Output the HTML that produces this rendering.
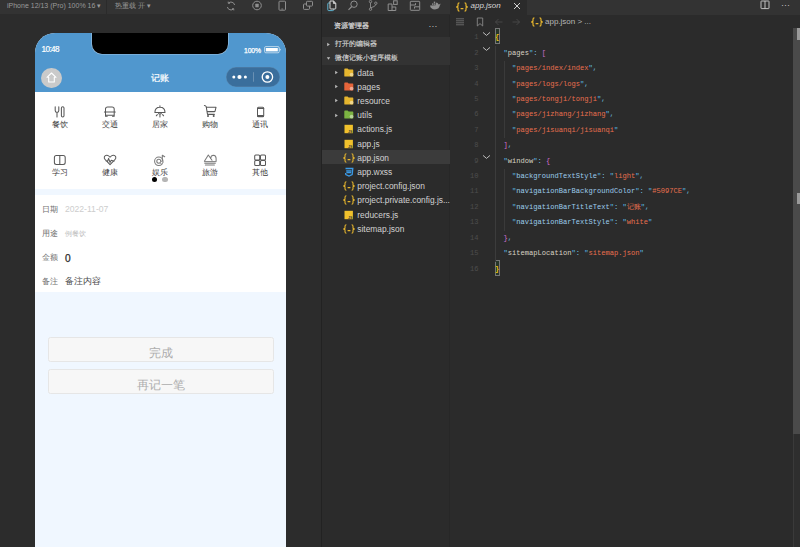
<!DOCTYPE html>
<html><head><meta charset="utf-8">
<style>
*{margin:0;padding:0;box-sizing:border-box}
html,body{width:800px;height:547px;overflow:hidden;background:#2b2b2b;font-family:"Liberation Sans",sans-serif}
.a{position:absolute}
svg{display:block}
#sim{left:0;top:0;width:321px;height:547px;background:#2c2c2c}
#simbar{left:0;top:0;width:321px;height:14px;background:#333}
#vdiv{left:321px;top:0;width:1px;height:547px;background:#222}
#exp{left:322px;top:0;width:128px;height:547px;background:#2b2b2b}
#expbar{left:322px;top:0;width:128px;height:14px;background:#333}
#ed{left:450px;top:0;width:350px;height:547px;background:#2b2b2b}
#tabbar{left:450px;top:0;width:350px;height:14.5px;background:#333}
#tab{left:450px;top:0;width:77px;height:14.5px;background:#2b2b2b}
.tb{font-size:7px;color:#9a9a9a;white-space:nowrap;line-height:10px}
/* phone */
#phone{left:34.5px;top:33px;width:251px;height:520px;background:#f0f7ff;border-radius:20px 20px 0 0;overflow:hidden}
#hdr{left:0;top:0;width:251px;height:59px;background:#5097ce}
#notch{left:57.5px;top:-1px;width:136px;height:22px;background:#000;border-radius:0 0 10px 10px;box-shadow:0 0 0 0.6px #9ec3e3}
#grid{left:0;top:59px;width:251px;height:97px;background:#fff}
#form{left:0;top:162px;width:251px;height:97px;background:#fff}
.btn{left:13.5px;width:225.5px;height:25px;background:#f7f7f7;border:0.8px solid #e6e6e6;border-radius:2.5px;font-size:11.6px;color:#adadad;text-align:center;line-height:29.5px}
.gi{width:50px;text-align:center;font-size:7.6px;color:#3a3a3a;line-height:9px}
.code{font-family:"Liberation Mono",monospace;font-size:7.08px;line-height:15.42px;white-space:pre}
.ln{left:450px;width:28.6px;text-align:right;color:#4d4d4d;font-family:"Liberation Mono",monospace;font-size:7.08px;line-height:15.42px}
.fr{left:322px;width:128px;height:14.2px;font-size:7.6px;color:#c5c5c5;line-height:14.2px;white-space:nowrap}

.b1{color:#f1c40f;font-weight:bold}.b2{color:#d070d0}.q{color:#5cb8e0}.k1{color:#d8d2c4}.k2{color:#9ccbec}.s{color:#e8704f}.c{color:#7cc4e4}.m{color:#6cb8dc}
.fl{font-size:8.4px;color:#707070;line-height:12px;white-space:nowrap}.fv{line-height:12px;white-space:nowrap}
.ft{font-size:8.4px;color:#d2d2d2;line-height:10.8px;white-space:nowrap}
</style></head><body>
<div id="sim" class="a"></div>
<div id="simbar" class="a"></div>
<div id="vdiv" class="a"></div>
<div id="exp" class="a"></div>
<div id="expbar" class="a"></div>
<div id="ed" class="a"></div>
<div id="tabbar" class="a"></div>
<div id="tab" class="a"></div>
<div class="a" style="left:449.3px;top:14.5px;width:1px;height:533px;background:#272727"></div>

<!-- simulator toolbar -->
<div class="a tb" style="left:7px;top:0.6px">iPhone 12/13 (Pro) 100% 16 ▾</div>
<div class="a tb" style="left:115px;top:0.6px">热重载 开 ▾</div>

<!-- phone -->
<div id="phone" class="a">
  <div id="hdr" class="a"></div>
  <div id="notch" class="a"></div>
  <div class="a" style="left:7px;top:11.8px;font-size:8.2px;color:#fff;line-height:10px;letter-spacing:-0.6px;-webkit-text-stroke:0.2px #fff">10:48</div>
  <div class="a" style="left:209.5px;top:13.5px;font-size:6.8px;color:#fff;line-height:8px;letter-spacing:-0.15px;-webkit-text-stroke:0.25px #fff">100%</div>
  <svg class="a" style="left:229px;top:12.5px" width="18" height="8" viewBox="0 0 18 8">
    <rect x="0.6" y="0.6" width="14.6" height="6.2" rx="1.2" fill="none" stroke="rgba(255,255,255,0.6)" stroke-width="1"/>
    <rect x="1.8" y="2" width="12" height="3.4" fill="#fff"/>
    <path d="M15.6 2.3 L17 3.7 L15.6 5.1 Z" fill="rgba(255,255,255,0.7)"/>
  </svg>
  <!-- nav -->
  <div class="a" style="left:6.2px;top:34.5px;width:21px;height:20.5px;border-radius:50%;background:#cacaca"></div>
  <svg class="a" style="left:11px;top:39px" width="11" height="11" viewBox="0 0 11 11">
    <path d="M5.5 1 L10 5.3 L8.3 5.3 L8.3 10 L2.7 10 L2.7 5.3 L1 5.3 Z" fill="none" stroke="#fff" stroke-width="1.1" stroke-linejoin="round"/>
  </svg>
  <div class="a" style="left:0;top:39px;width:251px;text-align:center;font-size:8.6px;color:#fff;line-height:12px;-webkit-text-stroke:0.2px #fff">记账</div>
  <div class="a" style="left:191px;top:34.1px;width:54.6px;height:19.5px;border-radius:10px;background:#3a6e9c;box-shadow:inset 0 0 0 0.5px rgba(255,255,255,0.15)"></div>
  <svg class="a" style="left:191px;top:34.1px" width="55" height="20" viewBox="0 0 55 20">
    <circle cx="7.8" cy="10" r="1.5" fill="#fff"/>
    <circle cx="13.5" cy="10" r="2.1" fill="#fff"/>
    <circle cx="19.4" cy="10" r="1.5" fill="#fff"/>
    <rect x="27" y="5.2" width="0.8" height="9.5" fill="rgba(255,255,255,0.3)"/>
    <circle cx="41.4" cy="10" r="5.2" fill="none" stroke="#fff" stroke-width="1.3"/>
    <circle cx="41.4" cy="10" r="2" fill="#fff"/>
  </svg>
  <div id="grid" class="a"></div>
  <div id="form" class="a"></div>
  <svg class="a" style="left:18.7px;top:71.6px" width="15" height="15" viewBox="53.2 104.6 15 15"><path d="M55.4 106.4 L55.4 110 Q55.4 111.8 57.2 112.2 L57.2 116.6 M59 106.4 L59 110 Q59 111.8 57.2 112.2" fill="none" stroke="#585858" stroke-width="1.05" stroke-linejoin="round" stroke-linecap="round"/><rect x="61.6" y="106.4" width="2.6" height="10.2" rx="1.3" fill="none" stroke="#585858" stroke-width="1.05" stroke-linejoin="round" stroke-linecap="round"/></svg>
  <svg class="a" style="left:68.3px;top:71.6px" width="15" height="15" viewBox="102.8 104.6 15 15"><path d="M105.3 111.5 L105.3 108.6 Q105.3 106.6 107.5 106.6 L111.8 106.6 Q114 106.6 114 108.6 L114 111.5 M104.2 111.5 L115.1 111.5 M105.3 111.5 L105.3 115.6 M114 111.5 L114 115.6 M105.3 114.8 L114 114.8" fill="none" stroke="#585858" stroke-width="1.05" stroke-linejoin="round" stroke-linecap="round"/><path d="M105.6 115.9 L107 115.9 M112.3 115.9 L113.7 115.9" fill="none" stroke="#585858" stroke-width="1.05" stroke-linejoin="round" stroke-linecap="round" stroke-width="1.2"/></svg>
  <svg class="a" style="left:118.4px;top:71.6px" width="15" height="15" viewBox="152.9 104.6 15 15"><path d="M154.8 112 Q154.8 106.8 159.85 106.8 Q164.9 106.8 164.9 112 Z M159.85 105.4 L159.85 106.8 M158.3 112.2 Q158.5 113.8 159.85 113.8 Q161.2 113.8 161.4 112.2 M157.2 114.2 L156.2 115.4 M159.85 114.6 L159.85 116.6 M162.5 114.2 L163.5 115.4" fill="none" stroke="#585858" stroke-width="1.05" stroke-linejoin="round" stroke-linecap="round"/></svg>
  <svg class="a" style="left:168.7px;top:71.2px" width="15" height="15" viewBox="203.2 104.2 15 15"><path d="M207.4 111.6 L215.2 111.6 L214.6 114.6 L207.7 114.6 Z" fill="#d6d6d6"/><path d="M204.6 105.6 Q206 105.6 206.4 106.8 L207.7 114.6 L214.6 114.6 M206.8 107.5 L216.2 107.5 L215.2 111.6 L207.4 111.6" fill="none" stroke="#585858" stroke-width="1.05" stroke-linejoin="round" stroke-linecap="round"/><circle cx="208.2" cy="116.3" r="1" fill="#585858"/><circle cx="213.9" cy="116.3" r="1" fill="#585858"/></svg>
  <svg class="a" style="left:218.7px;top:71.6px" width="15" height="15" viewBox="253.2 104.6 15 15"><rect x="257.7" y="106.9" width="6.2" height="9.4" rx="1" fill="none" stroke="#585858" stroke-width="1.05" stroke-linejoin="round" stroke-linecap="round"/><path d="M257.7 108.1 L263.9 108.1" fill="none" stroke="#585858" stroke-width="1.05" stroke-linejoin="round" stroke-linecap="round"/><rect x="257.4" y="114.5" width="6.8" height="2" rx="0.8" fill="#585858"/></svg>
  <svg class="a" style="left:18.7px;top:119.6px" width="15" height="15" viewBox="53.2 152.6 15 15"><rect x="54.6" y="155" width="10.8" height="9.2" rx="2" fill="none" stroke="#585858" stroke-width="1.05" stroke-linejoin="round" stroke-linecap="round"/><path d="M60 155 L60 164.2" fill="none" stroke="#585858" stroke-width="1.05" stroke-linejoin="round" stroke-linecap="round"/></svg>
  <svg class="a" style="left:68.3px;top:119.6px" width="15" height="15" viewBox="102.8 152.6 15 15"><path d="M109.85 164.2 L105 159.3 Q103.6 157.8 104.2 156.3 Q105 154.7 106.8 154.9 Q108.6 155.1 109.85 156.8 Q111.1 155.1 112.9 154.9 Q114.7 154.7 115.5 156.3 Q116.1 157.8 114.7 159.3 Z M106 160.6 L107.5 160.6 L108.4 158 L109.8 162 L111 159.8 L113.8 160.8" fill="none" stroke="#585858" stroke-width="1.05" stroke-linejoin="round" stroke-linecap="round"/></svg>
  <svg class="a" style="left:118.4px;top:119.6px" width="15" height="15" viewBox="152.9 152.6 15 15"><circle cx="158.7" cy="160.9" r="4.2" fill="none" stroke="#7a7a7a" stroke-width="1.05" stroke-linejoin="round" stroke-linecap="round"/><circle cx="158.7" cy="160.9" r="2" fill="none" stroke="#7a7a7a" stroke-width="1.05" stroke-linejoin="round" stroke-linecap="round"/><path d="M162.2 160.5 L162.2 154.8 L164.6 156.4" fill="none" stroke="#7a7a7a" stroke-width="1.05" stroke-linejoin="round" stroke-linecap="round"/><circle cx="161.5" cy="162.3" r="1.2" fill="#fff" stroke="#8a8a8a" stroke-width="0.9"/></svg>
  <svg class="a" style="left:168.7px;top:119.6px" width="15" height="15" viewBox="203.2 152.6 15 15"><path d="M204.6 160.8 L208.5 154.6 L212.2 159.8 M210.8 158.2 Q211 155 213.6 154.8 Q216.3 155 216.3 158 L216.3 160.8 M205 162.9 L215.5 162.9 M205.6 164.5 L214.6 164.5" fill="none" stroke="#7a7a7a" stroke-width="1.05" stroke-linejoin="round" stroke-linecap="round"/><path d="M204.3 161.3 L216.4 161.3" stroke="#8a8a8a" stroke-width="1.3"/></svg>
  <svg class="a" style="left:218.7px;top:119.6px" width="15" height="15" viewBox="253.2 152.6 15 15"><rect x="254.9" y="154.6" width="5" height="5" rx="1" fill="none" stroke="#585858" stroke-width="1.05" stroke-linejoin="round" stroke-linecap="round"/><rect x="260.7" y="154.6" width="5" height="5" rx="1" fill="none" stroke="#585858" stroke-width="1.05" stroke-linejoin="round" stroke-linecap="round"/><rect x="254.9" y="160.2" width="5" height="5" rx="1" fill="none" stroke="#585858" stroke-width="1.05" stroke-linejoin="round" stroke-linecap="round"/><rect x="260.7" y="160.2" width="5" height="5" rx="1" fill="none" stroke="#585858" stroke-width="1.05" stroke-linejoin="round" stroke-linecap="round"/></svg>
  <div class="a gi" style="left:0.1px;top:86.8px">餐饮</div>
  <div class="a gi" style="left:50.3px;top:86.8px">交通</div>
  <div class="a gi" style="left:100.5px;top:86.8px">居家</div>
  <div class="a gi" style="left:150.7px;top:86.8px">购物</div>
  <div class="a gi" style="left:200.9px;top:86.8px">通讯</div>
  <div class="a gi" style="left:0.1px;top:134.9px">学习</div>
  <div class="a gi" style="left:50.3px;top:134.9px">健康</div>
  <div class="a gi" style="left:100.5px;top:134.9px">娱乐</div>
  <div class="a gi" style="left:150.7px;top:134.9px">旅游</div>
  <div class="a gi" style="left:200.9px;top:134.9px">其他</div>
  <div class="a" style="left:117.3px;top:143.9px;width:5.6px;height:5.6px;border-radius:50%;background:#000"></div>
  <div class="a" style="left:127.9px;top:143.9px;width:5.6px;height:5.6px;border-radius:50%;background:#b5b5b5"></div>
  <div class="a fl" style="left:7px;top:169.7px">日期</div>
  <div class="a fv" style="left:30.5px;top:170px;font-size:8.6px;color:#cdcdcd">2022-11-07</div>
  <div class="a fl" style="left:7px;top:194.3px">用途</div>
  <div class="a fv" style="left:30.5px;top:195.3px;font-size:7.2px;color:#bdbdbd">例餐饮</div>
  <div class="a fl" style="left:7px;top:218.0px">金额</div>
  <div class="a fv" style="left:30.5px;top:219.5px;font-size:10.2px;color:#2a2a2a;-webkit-text-stroke:0.25px #2a2a2a">0</div>
  <div class="a fl" style="left:7px;top:241.6px">备注</div>
  <div class="a fv" style="left:30.5px;top:241.6px;font-size:9.4px;color:#4a4a4a">备注内容</div>
  <div class="a btn" style="top:304px">完成</div>
  <div class="a btn" style="top:336px">再记一笔</div>
</div>

<!-- toolbars -->
<svg class="a" style="left:224.7px;top:-0.5px" width="12" height="12" viewBox="0 0 12 12"><path d="M9.6 5 A3.7 3.7 0 0 0 3.4 3.1 M2.4 7 A3.7 3.7 0 0 0 8.6 8.9" fill="none" stroke="#8f8f8f" stroke-width="1"/><path d="M3.2 1.6 L3.3 3.3 L5 3.3 M8.8 10.4 L8.7 8.7 L7 8.7" fill="none" stroke="#8f8f8f" stroke-width="0.9"/></svg>
<svg class="a" style="left:250.5px;top:0px" width="12" height="12" viewBox="0 0 12 12"><circle cx="6" cy="5.5" r="4.3" fill="none" stroke="#8f8f8f" stroke-width="1"/><rect x="4.3" y="3.8" width="3.4" height="3.4" rx="0.4" fill="#8f8f8f"/></svg>
<svg class="a" style="left:276px;top:0px" width="12" height="12" viewBox="0 0 12 12"><rect x="3" y="1.2" width="6.5" height="9" rx="0.8" fill="none" stroke="#8f8f8f" stroke-width="1"/><path d="M5.3 9 L7.2 9" stroke="#8f8f8f" stroke-width="0.8"/></svg>
<svg class="a" style="left:302px;top:0px" width="12" height="12" viewBox="0 0 12 12"><rect x="4.5" y="1.3" width="6" height="4.8" rx="0.8" fill="none" stroke="#8f8f8f" stroke-width="1"/><path d="M4.5 4 L2.3 4 Q1.5 4 1.5 4.8 L1.5 8.6 Q1.5 9.4 2.3 9.4 L6.7 9.4 Q7.5 9.4 7.5 8.6 L7.5 6.1" fill="none" stroke="#8f8f8f" stroke-width="1"/></svg>
<div class="a" style="left:106px;top:0;width:1px;height:14px;background:#2b2b2b"></div>
<svg class="a" style="left:325.5px;top:0px" width="12" height="12" viewBox="0 0 12 12"><path d="M4 3 L2.6 3 Q1.8 3 1.8 3.8 L1.8 9.8 Q1.8 10.6 2.6 10.6 L6.8 10.6 Q7.6 10.6 7.6 9.8 L7.6 9" fill="none" stroke="#5fb3cf" stroke-width="1"/><path d="M4 1 L7.6 1 L9.8 3.2 L9.8 8.2 Q9.8 9 9 9 L4.8 9 Q4 9 4 8.2 Z" fill="none" stroke="#d8d8d8" stroke-width="1"/><path d="M7.4 1 L7.4 3.4 L9.8 3.4" fill="#d8d8d8" stroke="#d8d8d8" stroke-width="0.8"/></svg>
<svg class="a" style="left:346.5px;top:0px" width="12" height="12" viewBox="0 0 12 12"><circle cx="7" cy="4.2" r="3.2" fill="none" stroke="#8f8f8f" stroke-width="1"/><path d="M4.8 6.5 L1.5 9.8" stroke="#8f8f8f" stroke-width="1.1"/></svg>
<svg class="a" style="left:367px;top:0px" width="12" height="12" viewBox="0 0 12 12"><circle cx="3.5" cy="1.6" r="1.2" fill="none" stroke="#8f8f8f" stroke-width="0.9"/><circle cx="3.5" cy="9.2" r="1.2" fill="none" stroke="#8f8f8f" stroke-width="0.9"/><circle cx="8.8" cy="3.2" r="1.2" fill="none" stroke="#8f8f8f" stroke-width="0.9"/><path d="M3.5 2.8 L3.5 8 M8.8 4.4 Q8.8 6.5 3.8 7.8" fill="none" stroke="#8f8f8f" stroke-width="0.9"/></svg>
<svg class="a" style="left:386.5px;top:0px" width="12" height="12" viewBox="0 0 12 12"><path d="M1.2 4 L5 4 L5 10.5 L1.2 10.5 Z M5 7 L8.8 7 L8.8 10.5 L5 10.5" fill="none" stroke="#8f8f8f" stroke-width="1"/><rect x="6.6" y="0.8" width="3.6" height="3.6" fill="none" stroke="#8f8f8f" stroke-width="1"/></svg>
<svg class="a" style="left:408.5px;top:0px" width="12" height="12" viewBox="0 0 12 12"><rect x="1.3" y="1.3" width="9.4" height="9" rx="0.6" fill="none" stroke="#8f8f8f" stroke-width="1"/><path d="M1.3 5 L6.5 5 L6.5 3.2 M10.7 6.8 L5.5 6.8 L5.5 8.6" fill="none" stroke="#8f8f8f" stroke-width="1"/></svg>
<svg class="a" style="left:428.5px;top:0px" width="12" height="12" viewBox="0 0 12 12"><path d="M1 5.5 Q1.5 9.2 6 9.5 Q10 9.4 10.8 5.6 Q11.6 4.6 11.4 3.5 Q10.6 4.6 9.6 4.6 Q8.8 2.6 7.4 2.6 Q6.4 3.2 6.6 5.2 L1 5.5 Z" fill="#8f8f8f"/><rect x="3" y="3.4" width="1.4" height="1.4" fill="#8f8f8f"/><rect x="4.8" y="3.4" width="1.4" height="1.4" fill="#8f8f8f"/><rect x="4.8" y="1.6" width="1.4" height="1.4" fill="#8f8f8f"/></svg>
<div class="a" style="left:455.5px;top:1.5px;"><svg width="12" height="10" viewBox="0 0 12 10"><path d="M3.4 0.8 Q2 0.8 2 2.2 L2 4.1 L0.7 5 L2 5.9 L2 7.8 Q2 9.2 3.4 9.2 M8.6 0.8 Q10 0.8 10 2.2 L10 4.1 L11.3 5 L10 5.9 L10 7.8 Q10 9.2 8.6 9.2 M4.6 6.6 L7.4 6.6" fill="none" stroke="#e5b52e" stroke-width="1.2"/></svg></div>
<div class="a" style="left:470.5px;top:1px;font-size:8px;font-style:italic;color:#d6d6d6;line-height:10px">app.json</div>
<svg class="a" style="left:512.5px;top:1.5px" width="8" height="8" viewBox="0 0 8 8"><path d="M1 1 L7 7 M7 1 L1 7" stroke="#d0d0d0" stroke-width="1"/></svg>
<svg class="a" style="left:760px;top:0px" width="10" height="10" viewBox="0 0 10 10"><rect x="1" y="1" width="8" height="7.6" rx="0.5" fill="none" stroke="#cfcfcf" stroke-width="0.9"/><path d="M5 1 L5 8.6" stroke="#cfcfcf" stroke-width="0.9"/></svg>
<div class="a" style="left:781px;top:1px;font-size:9px;color:#c4c4c4;line-height:8px;letter-spacing:0px">···</div>
<svg class="a" style="left:454.5px;top:17px" width="10" height="10" viewBox="0 0 10 10"><path d="M1 1.8 L9 1.8 M1 3.8 L9 3.8 M1 5.8 L9 5.8 M1 7.8 L9 7.8" stroke="#777" stroke-width="0.8"/></svg>
<svg class="a" style="left:474.5px;top:16.5px" width="10" height="10" viewBox="0 0 10 10"><path d="M2.3 1 L7.7 1 L7.7 9 L5 6.6 L2.3 9 Z" fill="none" stroke="#888" stroke-width="0.9"/></svg>
<svg class="a" style="left:493.5px;top:17px" width="10" height="10" viewBox="0 0 10 10"><path d="M8.5 5 L1.5 5 M4.5 2 L1.5 5 L4.5 8" fill="none" stroke="#4a4a4a" stroke-width="0.9"/></svg>
<svg class="a" style="left:511px;top:17px" width="10" height="10" viewBox="0 0 10 10"><path d="M1.5 5 L8.5 5 M5.5 2 L8.5 5 L5.5 8" fill="none" stroke="#4a4a4a" stroke-width="0.9"/></svg>
<div class="a" style="left:531px;top:17px;"><svg width="12" height="10" viewBox="0 0 12 10"><path d="M3.4 0.8 Q2 0.8 2 2.2 L2 4.1 L0.7 5 L2 5.9 L2 7.8 Q2 9.2 3.4 9.2 M8.6 0.8 Q10 0.8 10 2.2 L10 4.1 L11.3 5 L10 5.9 L10 7.8 Q10 9.2 8.6 9.2 M4.6 6.6 L7.4 6.6" fill="none" stroke="#e5b52e" stroke-width="1.2"/></svg></div>
<div class="a" style="left:545px;top:16.5px;font-size:8px;color:#b8b8b8;line-height:10px;white-space:nowrap">app.json <span style="font-size:8px">&gt;</span> ...</div>
<div class="a" style="left:793px;top:28.3px;width:7px;height:519px;background:#2e2e2e;border-left:1px solid #3a3a3a"></div>
<div class="a" style="left:793px;top:28.3px;width:7px;height:406px;background:#4a4a4a"></div>
<div class="a" style="left:796.8px;top:28.3px;width:3.2px;height:11.3px;background:#9a9a9a"></div>
<div class="a" style="left:796.8px;top:193.2px;width:3.2px;height:11.3px;background:#9a9a9a"></div>
<!-- explorer -->
<div class="a" style="left:322px;top:37px;width:128px;height:28.4px;background:#333"></div>
<div class="a" style="left:322px;top:150px;width:128px;height:14.4px;background:#3b3b3b"></div>
<div class="a" style="left:334.3px;top:21px;font-size:7px;color:#d8d8d8;line-height:10px;white-space:nowrap;-webkit-text-stroke:0.2px #d8d8d8">资源管理器</div>
<div class="a" style="left:428.5px;top:21.8px;font-size:8.5px;color:#c8c8c8;line-height:8px;letter-spacing:0.2px">···</div>
<svg class="a" style="left:325.5px;top:41.5px" width="5" height="5" viewBox="0 0 5 5"><path d="M1.2 0.8 L3.8 2.5 L1.2 4.2 Z" fill="#bbb"/></svg>
<svg class="a" style="left:325.5px;top:55.5px" width="5" height="5" viewBox="0 0 5 5"><path d="M0.8 1.2 L4.2 1.2 L2.5 3.8 Z" fill="#bbb"/></svg>
<div class="a" style="left:334.6px;top:39px;font-size:7px;color:#d4d4d4;line-height:10px;white-space:nowrap;-webkit-text-stroke:0.15px #d4d4d4">打开的编辑器</div>
<div class="a" style="left:334.6px;top:53px;font-size:7px;color:#d4d4d4;line-height:10px;white-space:nowrap;-webkit-text-stroke:0.15px #d4d4d4">微信记账小程序模板</div>
<svg class="a" style="left:334px;top:70.0px" width="5" height="5" viewBox="0 0 5 5"><path d="M1.2 0.8 L3.8 2.5 L1.2 4.2 Z" fill="#bbb"/></svg>
<svg class="a" style="left:344px;top:67.5px" width="10" height="9" viewBox="0 0 10 9"><path d="M0.3 1.2 Q0.3 0.5 1 0.5 L3.6 0.5 L4.6 1.6 L8.6 1.6 Q9.3 1.6 9.3 2.3 L9.3 8 Q9.3 8.6 8.6 8.6 L1 8.6 Q0.3 8.6 0.3 8 Z" fill="#e5b52e"/><circle cx="7.6" cy="6.6" r="1.9" fill="#fff" opacity="0.45"/></svg>
<div class="a ft" style="left:357.3px;top:67.5px">data</div>
<svg class="a" style="left:334px;top:84.2px" width="5" height="5" viewBox="0 0 5 5"><path d="M1.2 0.8 L3.8 2.5 L1.2 4.2 Z" fill="#bbb"/></svg>
<svg class="a" style="left:344px;top:81.7px" width="10" height="9" viewBox="0 0 10 9"><path d="M0.3 1.2 Q0.3 0.5 1 0.5 L3.6 0.5 L4.6 1.6 L8.6 1.6 Q9.3 1.6 9.3 2.3 L9.3 8 Q9.3 8.6 8.6 8.6 L1 8.6 Q0.3 8.6 0.3 8 Z" fill="#e5643a"/><circle cx="7.6" cy="6.6" r="1.9" fill="#fff" opacity="0.45"/></svg>
<div class="a ft" style="left:357.3px;top:81.7px">pages</div>
<svg class="a" style="left:334px;top:98.4px" width="5" height="5" viewBox="0 0 5 5"><path d="M1.2 0.8 L3.8 2.5 L1.2 4.2 Z" fill="#bbb"/></svg>
<svg class="a" style="left:344px;top:95.9px" width="10" height="9" viewBox="0 0 10 9"><path d="M0.3 1.2 Q0.3 0.5 1 0.5 L3.6 0.5 L4.6 1.6 L8.6 1.6 Q9.3 1.6 9.3 2.3 L9.3 8 Q9.3 8.6 8.6 8.6 L1 8.6 Q0.3 8.6 0.3 8 Z" fill="#e5b52e"/><circle cx="7.6" cy="6.6" r="1.9" fill="#fff" opacity="0.45"/></svg>
<div class="a ft" style="left:357.3px;top:95.9px">resource</div>
<svg class="a" style="left:334px;top:112.6px" width="5" height="5" viewBox="0 0 5 5"><path d="M1.2 0.8 L3.8 2.5 L1.2 4.2 Z" fill="#bbb"/></svg>
<svg class="a" style="left:344px;top:110.1px" width="10" height="9" viewBox="0 0 10 9"><path d="M0.3 1.2 Q0.3 0.5 1 0.5 L3.6 0.5 L4.6 1.6 L8.6 1.6 Q9.3 1.6 9.3 2.3 L9.3 8 Q9.3 8.6 8.6 8.6 L1 8.6 Q0.3 8.6 0.3 8 Z" fill="#7cb342"/><circle cx="7.6" cy="6.6" r="1.9" fill="#fff" opacity="0.45"/></svg>
<div class="a ft" style="left:357.3px;top:110.1px">utils</div>
<svg class="a" style="left:344px;top:124.3px" width="10" height="10" viewBox="0 0 10 10"><rect x="0.5" y="0.8" width="8.4" height="8.4" fill="#f0c12c"/><text x="8.3" y="8.6" font-size="3.6" text-anchor="end" fill="#3a3a3a" font-family="Liberation Sans" font-weight="bold">JS</text></svg>
<div class="a ft" style="left:357.3px;top:124.3px">actions.js</div>
<svg class="a" style="left:344px;top:138.5px" width="10" height="10" viewBox="0 0 10 10"><rect x="0.5" y="0.8" width="8.4" height="8.4" fill="#f0c12c"/><text x="8.3" y="8.6" font-size="3.6" text-anchor="end" fill="#3a3a3a" font-family="Liberation Sans" font-weight="bold">JS</text></svg>
<div class="a ft" style="left:357.3px;top:138.5px">app.js</div>
<svg class="a" style="left:342.5px;top:152.7px" width="12" height="10" viewBox="0 0 12 10"><path d="M3.4 0.8 Q2 0.8 2 2.2 L2 4.1 L0.7 5 L2 5.9 L2 7.8 Q2 9.2 3.4 9.2 M8.6 0.8 Q10 0.8 10 2.2 L10 4.1 L11.3 5 L10 5.9 L10 7.8 Q10 9.2 8.6 9.2 M4.6 6.6 L7.4 6.6" fill="none" stroke="#e5b52e" stroke-width="1.1"/></svg>
<div class="a ft" style="left:357.3px;top:152.7px">app.json</div>
<svg class="a" style="left:344px;top:166.9px" width="10" height="10" viewBox="0 0 10 10"><path d="M1.5 1.5 L8.8 1.5 L8.2 7.5 L5 9 L1.8 7.5 L1.6 6 M2.2 3.8 L7.5 3.8 M2.4 5.5 L7.2 5.5" fill="none" stroke="#3b9ae6" stroke-width="1.3"/></svg>
<div class="a ft" style="left:357.3px;top:166.9px">app.wxss</div>
<svg class="a" style="left:342.5px;top:181.1px" width="12" height="10" viewBox="0 0 12 10"><path d="M3.4 0.8 Q2 0.8 2 2.2 L2 4.1 L0.7 5 L2 5.9 L2 7.8 Q2 9.2 3.4 9.2 M8.6 0.8 Q10 0.8 10 2.2 L10 4.1 L11.3 5 L10 5.9 L10 7.8 Q10 9.2 8.6 9.2 M4.6 6.6 L7.4 6.6" fill="none" stroke="#e5b52e" stroke-width="1.1"/></svg>
<div class="a ft" style="left:357.3px;top:181.1px">project.config.json</div>
<svg class="a" style="left:342.5px;top:195.3px" width="12" height="10" viewBox="0 0 12 10"><path d="M3.4 0.8 Q2 0.8 2 2.2 L2 4.1 L0.7 5 L2 5.9 L2 7.8 Q2 9.2 3.4 9.2 M8.6 0.8 Q10 0.8 10 2.2 L10 4.1 L11.3 5 L10 5.9 L10 7.8 Q10 9.2 8.6 9.2 M4.6 6.6 L7.4 6.6" fill="none" stroke="#e5b52e" stroke-width="1.1"/></svg>
<div class="a ft" style="left:357.3px;top:195.3px">project.private.config.js...</div>
<svg class="a" style="left:344px;top:209.5px" width="10" height="10" viewBox="0 0 10 10"><rect x="0.5" y="0.8" width="8.4" height="8.4" fill="#f0c12c"/><text x="8.3" y="8.6" font-size="3.6" text-anchor="end" fill="#3a3a3a" font-family="Liberation Sans" font-weight="bold">JS</text></svg>
<div class="a ft" style="left:357.3px;top:209.5px">reducers.js</div>
<svg class="a" style="left:342.5px;top:223.7px" width="12" height="10" viewBox="0 0 12 10"><path d="M3.4 0.8 Q2 0.8 2 2.2 L2 4.1 L0.7 5 L2 5.9 L2 7.8 Q2 9.2 3.4 9.2 M8.6 0.8 Q10 0.8 10 2.2 L10 4.1 L11.3 5 L10 5.9 L10 7.8 Q10 9.2 8.6 9.2 M4.6 6.6 L7.4 6.6" fill="none" stroke="#e5b52e" stroke-width="1.1"/></svg>
<div class="a ft" style="left:357.3px;top:223.7px">sitemap.json</div>
<!-- editor code -->
<svg class="a" style="left:482px;top:31px" width="9" height="6" viewBox="0 0 9 6"><path d="M1 1.4 L4.5 4.4 L8 1.4" fill="none" stroke="#c4c4c4" stroke-width="0.95"/></svg>
<svg class="a" style="left:482px;top:46.4px" width="9" height="6" viewBox="0 0 9 6"><path d="M1 1.4 L4.5 4.4 L8 1.4" fill="none" stroke="#c4c4c4" stroke-width="0.95"/></svg>
<svg class="a" style="left:482px;top:154.3px" width="9" height="6" viewBox="0 0 9 6"><path d="M1 1.4 L4.5 4.4 L8 1.4" fill="none" stroke="#c4c4c4" stroke-width="0.95"/></svg>
<div class="a" style="left:495px;top:28.2px;width:4.8px;height:16px;border:0.7px solid #777;background:#27362a"></div>
<div class="a" style="left:495px;top:259.6px;width:4.8px;height:16px;border:0.7px solid #777;background:#27362a"></div>
<div class="a" style="left:495.2px;top:45.7px;width:0.8px;height:215.9px;background:#3c3c3c"></div>
<div class="a" style="left:503.7px;top:61.1px;width:0.8px;height:77.1px;background:#3a3a3a"></div>
<div class="a" style="left:503.7px;top:169.1px;width:0.8px;height:61.7px;background:#3a3a3a"></div>
<div class="a code" style="left:495px;top:30.29px"><span class="b1">{</span></div>
<div class="a ln" style="top:30.29px">1</div>
<div class="a code" style="left:495px;top:45.71px">  <span class="q">"</span><span class="k1">pages</span><span class="q">"</span><span class="c">: </span><span class="b2">[</span></div>
<div class="a ln" style="top:45.71px">2</div>
<div class="a code" style="left:495px;top:61.13px">    <span class="q">"</span><span class="s">pages/index/index</span><span class="q">"</span><span class="m">,</span></div>
<div class="a ln" style="top:61.13px">3</div>
<div class="a code" style="left:495px;top:76.55px">    <span class="q">"</span><span class="s">pages/logs/logs</span><span class="q">"</span><span class="m">,</span></div>
<div class="a ln" style="top:76.55px">4</div>
<div class="a code" style="left:495px;top:91.97px">    <span class="q">"</span><span class="s">pages/tongji/tongji</span><span class="q">"</span><span class="m">,</span></div>
<div class="a ln" style="top:91.97px">5</div>
<div class="a code" style="left:495px;top:107.39px">    <span class="q">"</span><span class="s">pages/jizhang/jizhang</span><span class="q">"</span><span class="m">,</span></div>
<div class="a ln" style="top:107.39px">6</div>
<div class="a code" style="left:495px;top:122.81px">    <span class="q">"</span><span class="s">pages/jisuanqi/jisuanqi</span><span class="q">"</span></div>
<div class="a ln" style="top:122.81px">7</div>
<div class="a code" style="left:495px;top:138.23px">  <span class="b2">]</span><span class="m">,</span></div>
<div class="a ln" style="top:138.23px">8</div>
<div class="a code" style="left:495px;top:153.65px">  <span class="q">"</span><span class="k1">window</span><span class="q">"</span><span class="c">: </span><span class="b2">{</span></div>
<div class="a ln" style="top:153.65px">9</div>
<div class="a code" style="left:495px;top:169.07px">    <span class="q">"</span><span class="k2">backgroundTextStyle</span><span class="q">"</span><span class="c">: </span><span class="q">"</span><span class="s">light</span><span class="q">"</span><span class="m">,</span></div>
<div class="a ln" style="top:169.07px">10</div>
<div class="a code" style="left:495px;top:184.49px">    <span class="q">"</span><span class="k2">navigationBarBackgroundColor</span><span class="q">"</span><span class="c">: </span><span class="q">"</span><span class="s">#5097CE</span><span class="q">"</span><span class="m">,</span></div>
<div class="a ln" style="top:184.49px">11</div>
<div class="a code" style="left:495px;top:199.91px">    <span class="q">"</span><span class="k2">navigationBarTitleText</span><span class="q">"</span><span class="c">: </span><span class="q">"</span><span class="s">记账</span><span class="q">"</span><span class="m">,</span></div>
<div class="a ln" style="top:199.91px">12</div>
<div class="a code" style="left:495px;top:215.33px">    <span class="q">"</span><span class="k2">navigationBarTextStyle</span><span class="q">"</span><span class="c">: </span><span class="q">"</span><span class="s">white</span><span class="q">"</span></div>
<div class="a ln" style="top:215.33px">13</div>
<div class="a code" style="left:495px;top:230.75px">  <span class="b2">}</span><span class="m">,</span></div>
<div class="a ln" style="top:230.75px">14</div>
<div class="a code" style="left:495px;top:246.17px">  <span class="q">"</span><span class="k1">sitemapLocation</span><span class="q">"</span><span class="c">: </span><span class="q">"</span><span class="s">sitemap.json</span><span class="q">"</span></div>
<div class="a ln" style="top:246.17px">15</div>
<div class="a code" style="left:495px;top:261.59px"><span class="b1">}</span></div>
<div class="a ln" style="top:261.59px">16</div>
</body></html>
